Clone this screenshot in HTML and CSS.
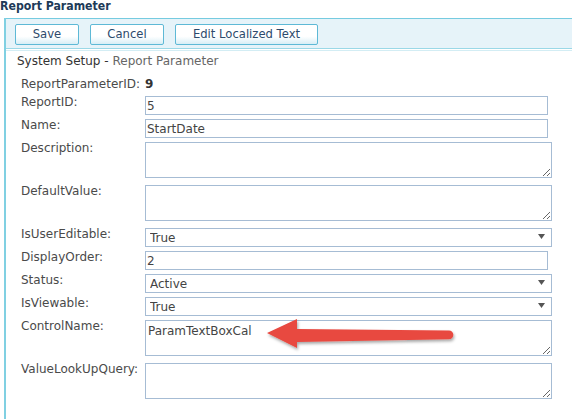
FILE: index.html
```html
<!DOCTYPE html>
<html>
<head>
<meta charset="utf-8">
<link rel="stylesheet" href="styles.css">
</head>
<body>
<h1 class="title">Report Parameter</h1>
<div class="panel">
  <div class="head">
    <div class="toolbar">
      <button class="btn btn-save">Save</button>
      <button class="btn btn-cancel">Cancel</button>
      <button class="btn btn-edit">Edit Localized Text</button>
    </div>
  </div>
  <div class="crumb">System Setup - <span class="crumb-page">Report Parameter</span></div>
  <div class="form">
    <div class="label label-static">ReportParameterID:</div>
    <div class="value">9</div>

    <div class="label">ReportID:</div>
    <input class="field input" value="5">

    <div class="label">Name:</div>
    <input class="field input" value="StartDate">

    <div class="label">Description:</div>
    <textarea class="field area"></textarea>

    <div class="label">DefaultValue:</div>
    <textarea class="field area"></textarea>

    <div class="label">IsUserEditable:</div>
    <div class="select-wrap">
      <select class="field select"><option>True</option></select>
      <svg class="caret" width="7" height="5" viewBox="0 0 7 5"><path d="M0 0H7L3.5 5Z"/></svg>
    </div>

    <div class="label">DisplayOrder:</div>
    <input class="field input" value="2">

    <div class="label">Status:</div>
    <div class="select-wrap">
      <select class="field select"><option>Active</option></select>
      <svg class="caret" width="7" height="5" viewBox="0 0 7 5"><path d="M0 0H7L3.5 5Z"/></svg>
    </div>

    <div class="label">IsViewable:</div>
    <div class="select-wrap">
      <select class="field select"><option>True</option></select>
      <svg class="caret" width="7" height="5" viewBox="0 0 7 5"><path d="M0 0H7L3.5 5Z"/></svg>
    </div>

    <div class="label">ControlName:</div>
    <textarea class="field area">ParamTextBoxCal</textarea>

    <div class="label">ValueLookUpQuery:</div>
    <textarea class="field area"></textarea>
  </div>
</div>
<svg class="arrow" width="200" height="46" viewBox="262 312 200 46">
  <defs>
    <filter id="sh" x="-10%" y="-30%" width="120%" height="180%">
      <feDropShadow dx="1" dy="2" stdDeviation="1.5" flood-color="#000" flood-opacity="0.35"/>
    </filter>
  </defs>
  <path filter="url(#sh)" fill="#e8483f" d="M267 333 L297 319 L297 329 L449 330.5 A4.3 4.3 0 0 1 449 339.2 L297 342 L297 348 Z"/>
</svg>
</body>
</html>
```
FILE: styles.css
```css
html, body {
  margin: 0;
  padding: 0;
  background: #fff;
  overflow: hidden;
}
body {
  position: relative;
  width: 572px;
  height: 419px;
  font-family: "DejaVu Sans", Verdana, sans-serif;
  color: #444;
}
.title {
  margin: -1px 0 0 0;
  height: 19px;
  font-family: "DejaVu Sans Condensed", "DejaVu Sans", sans-serif;
  font-size: 12.2px;
  line-height: 14px;
  font-weight: bold;
  color: #203a58;
}
.panel {
  margin-left: 4px;
  border-left: 2px solid #80d0e2;
  height: 420px;
}
.head {
  border-bottom: 1px solid #d3edf4;
  padding-bottom: 1px;
}
.toolbar {
  display: flex;
  gap: 11px;
  height: 31px;
  box-sizing: border-box;
  padding: 5px 0 0 9px;
  background: #e6f3f9;
  border-top: 1px solid #76cbe0;
  border-bottom: 1px solid #9ad8e7;
}
.btn {
  height: 21px;
  box-sizing: border-box;
  border: 1px solid #5eb9d6;
  border-radius: 2px;
  background: linear-gradient(#ffffff 0%, #ffffff 60%, #d8eef6 100%);
  font-family: inherit;
  font-size: 11.6px;
  line-height: 17px;
  color: #2c4a6c;
  padding: 0;
}
.btn-save { width: 64px; }
.btn-cancel { width: 74px; }
.btn-edit { width: 143px; }
.crumb {
  margin-top: 2px;
  padding-left: 11px;
  font-size: 12px;
  line-height: 16px;
  color: #333;
}
.crumb-page { color: #666; }
.form {
  display: grid;
  grid-template-columns: 124px 407px;
  row-gap: 4px;
  margin-top: 7px;
  padding-left: 15px;
  font-size: 12px;
}
.label {
  line-height: 13px;
  color: #4a4a4a;
  white-space: nowrap;
}
.label-static, .value {
  line-height: 16px;
}
.value {
  font-weight: bold;
  color: #333;
}
.field {
  box-sizing: border-box;
  margin: 0;
  border: 1px solid #a6bcd4;
  border-radius: 0;
  background: #fff;
  font-family: inherit;
  font-size: 12px;
  color: #444;
  outline: none;
}
.input {
  width: 403px;
  height: 19px;
  padding: 0 1px;
}
.area {
  display: block;
  width: 407px;
  height: 36px;
  margin-bottom: 3px;
  padding: 3px 2px;
  resize: vertical;
  line-height: 14px;
}
.select-wrap {
  position: relative;
  width: 407px;
  height: 19px;
}
.select {
  appearance: none;
  -webkit-appearance: none;
  width: 407px;
  height: 19px;
  padding: 0 0 0 4px;
}
.caret {
  position: absolute;
  right: 7px;
  top: 6px;
  fill: #555;
}
.arrow {
  position: absolute;
  left: 262px;
  top: 312px;
}
```
